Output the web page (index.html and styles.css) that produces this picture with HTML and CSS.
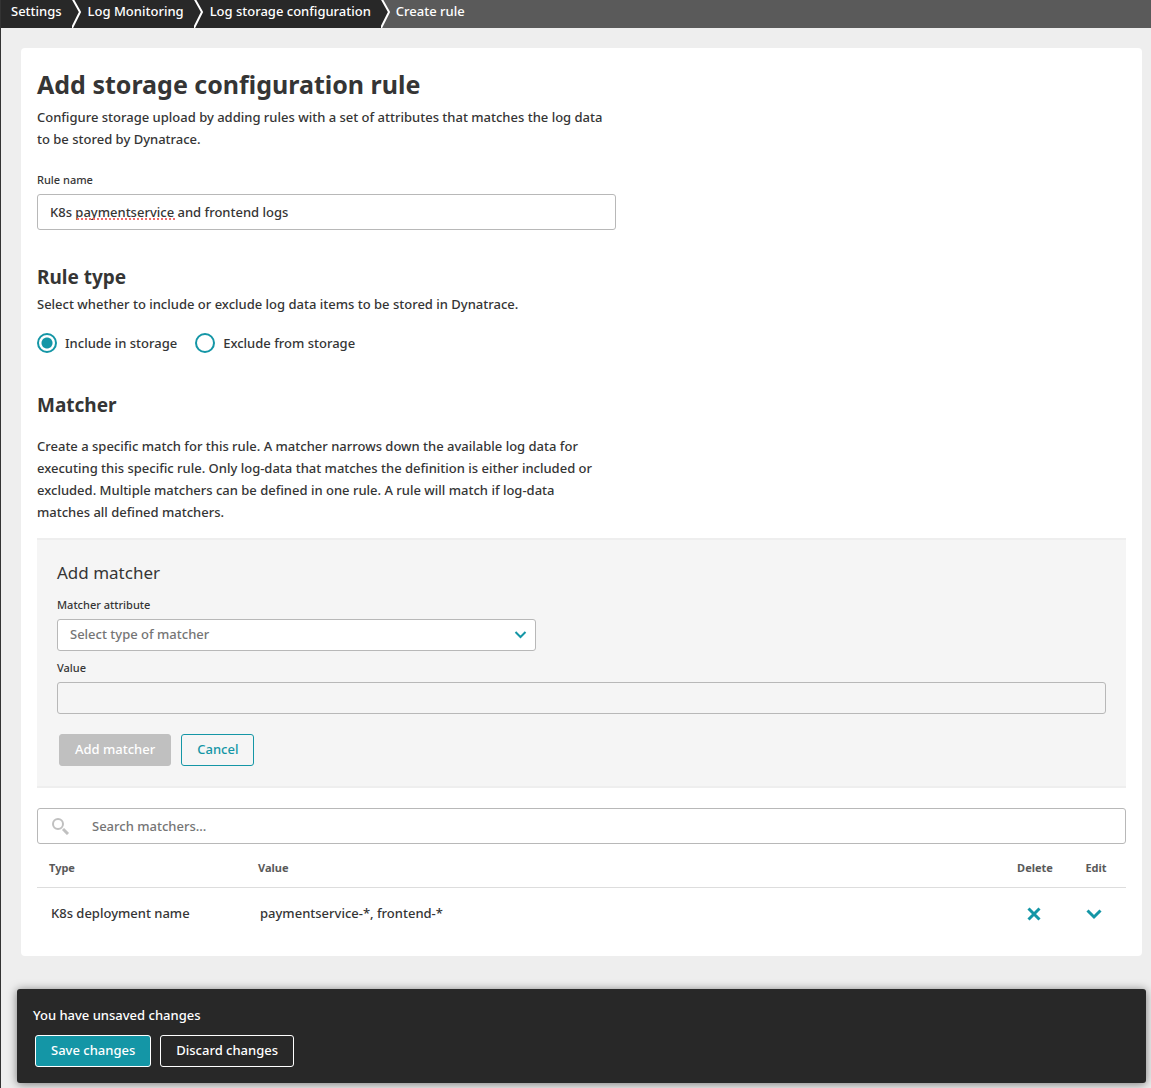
FILE: index.html
```html
<!DOCTYPE html>
<html lang="en">
<head>
<meta charset="utf-8">
<meta name="viewport" content="width=device-width, initial-scale=1">
<title>Create rule</title>
<link rel="stylesheet" href="styles.css">
</head>
<body>
<nav class="breadcrumbs" aria-label="Breadcrumb">
  <a class="crumb" href="#settings">Settings</a>
  <svg class="crumb-sep" viewBox="0 0 10 28" aria-hidden="true"><path d="M-1-4L8 12L-1 30"/></svg>
  <a class="crumb" href="#logs">Log Monitoring</a>
  <svg class="crumb-sep" viewBox="0 0 10 28" aria-hidden="true"><path d="M-1-4L8 12L-1 30"/></svg>
  <a class="crumb" href="#storage">Log storage configuration</a>
  <svg class="crumb-sep crumb-sep-last" viewBox="0 0 10 28" aria-hidden="true"><path d="M-1-4L8 12L-1 30"/></svg>
  <a class="crumb crumb-current" href="#create" aria-current="page">Create rule</a>
</nav>

<main class="card">
  <h1 class="title">Add storage configuration rule</h1>
  <p class="text">Configure storage upload by adding rules with a set of attributes that matches the log data to be stored by Dynatrace.</p>

  <div class="field rule-name">
    <label class="label" for="rule-name">Rule name</label>
    <div class="spelled">
      <input class="input" id="rule-name" type="text" value="K8s paymentservice and frontend logs" spellcheck="false">
      <span class="squiggle" aria-hidden="true"></span>
    </div>
  </div>

  <section class="rule-type">
    <h2 class="subtitle">Rule type</h2>
    <p class="text">Select whether to include or exclude log data items to be stored in Dynatrace.</p>
    <div class="radios">
      <label class="radio"><input class="radio-input" type="radio" name="type" checked>Include in storage</label>
      <label class="radio"><input class="radio-input" type="radio" name="type">Exclude from storage</label>
    </div>
  </section>

  <section class="matcher">
    <h2 class="subtitle">Matcher</h2>
    <p class="text matcher-text">Create a specific match for this rule. A matcher narrows down the available log data for executing this specific rule. Only log-data that matches the definition is either included or excluded. Multiple matchers can be defined in one rule. A rule will match if log-data matches all defined matchers.</p>

    <form class="panel">
      <h3 class="panel-title">Add matcher</h3>
      <label class="label" for="attribute">Matcher attribute</label>
      <div class="select-wrap">
        <select class="select" id="attribute"><option>Select type of matcher</option></select>
        <svg class="select-icon" viewBox="0 0 12 8" aria-hidden="true"><path d="M1 1L6 6L11 1"/></svg>
      </div>
      <label class="label value-label" for="value">Value</label>
      <input class="input input-disabled" id="value" type="text" disabled>
      <div class="buttons panel-buttons">
        <button class="button button-disabled" type="button" disabled>Add matcher</button>
        <button class="button button-outline" type="button">Cancel</button>
      </div>
    </form>

    <div class="search">
      <svg class="search-icon" viewBox="0 0 18 18" aria-hidden="true"><circle cx="6" cy="7" r="5"/><path d="M11 12L16 17" class="search-handle"/></svg>
      <input class="search-input" type="search" placeholder="Search matchers..." aria-label="Search matchers">
    </div>

    <table class="table">
      <thead>
        <tr><th class="col-type">Type</th><th>Value</th><th class="col-delete">Delete</th><th class="col-edit">Edit</th></tr>
      </thead>
      <tbody>
        <tr>
          <td>K8s deployment name</td>
          <td>paymentservice-*, frontend-*</td>
          <td class="cell-icon"><button class="icon-button" type="button" aria-label="Delete"><svg class="icon" viewBox="0 0 16 16" aria-hidden="true"><path d="M2.500 2.500L13.500 13.500M13.500 2.500L2.500 13.500"/></svg></button></td>
          <td class="cell-icon cell-edit"><button class="icon-button" type="button" aria-label="Edit"><svg class="icon" viewBox="0 0 16 16" aria-hidden="true"><path d="M1.500 4.500L8 11L14.500 4.500"/></svg></button></td>
        </tr>
      </tbody>
    </table>
  </section>
</main>

<footer class="unsaved">
  <p class="unsaved-text">You have unsaved changes</p>
  <div class="buttons">
    <button class="button button-save" type="button">Save changes</button>
    <button class="button button-discard" type="button">Discard changes</button>
  </div>
</footer>
</body>
</html>
```

FILE: styles.css
```css
* {
  box-sizing: border-box;
}

html {
  background: #eee;
}

body {
  margin: 0;
  min-height: 100vh;
  border-left: 1px solid #333;
  color: #353535;
  font: 500 13px/22px "Noto Sans", "Open Sans", sans-serif;
}

h1, h2, h3, p {
  margin: 0;
}

button, input, select {
  font: inherit;
  color: inherit;
}

.breadcrumbs {
  display: flex;
  height: 28px;
  background: #5a5a5a;
  color: #fff;
}

.crumb {
  padding: 0 10px 0 6px;
  background: #282828;
  color: #fff;
  text-decoration: none;
  white-space: nowrap;
}

.crumb:first-child {
  padding-left: 10px;
}

.crumb-current {
  padding-left: 5px;
  background: none;
}

.crumb-sep {
  flex: none;
  width: 10px;
  height: 28px;
  background: #282828;
  fill: #282828;
  stroke: #fff;
  stroke-width: 2;
}

.crumb-sep-last {
  background: #5a5a5a;
}

.card {
  margin: 20px 9px 33px 20px;
  padding: 16px;
  border-radius: 4px;
  background: #fff;
}

.title {
  margin-bottom: 2px;
  font-size: 25px;
  line-height: 40px;
  font-weight: 700;
}

.text {
  max-width: 579px;
}

.label {
  display: block;
  margin-bottom: 6px;
  font-size: 11px;
  line-height: 16px;
}

.rule-name {
  max-width: 579px;
  margin-top: 22px;
}

.spelled {
  position: relative;
}

.squiggle {
  position: absolute;
  left: 40px;
  bottom: 10px;
  width: 98px;
  border-bottom: 2px dotted #f06a6a;
}

.input {
  display: block;
  width: 100%;
  height: 36px;
  padding: 0 12px;
  border: 1px solid #b8b8b8;
  border-radius: 3px;
  background: #fff;
}

.input-disabled {
  height: 32px;
  background: #f5f5f5;
}

.rule-type {
  margin-top: 33px;
}

.subtitle {
  margin-bottom: 2px;
  font-size: 19px;
  line-height: 28px;
  font-weight: 700;
}

.radios {
  display: flex;
  gap: 18px;
  margin-top: 17px;
}

.radio {
  display: flex;
  align-items: center;
  gap: 8px;
}

.radio-input {
  appearance: none;
  width: 20px;
  height: 20px;
  margin: 0;
  border: 2px solid #1496a6;
  border-radius: 50%;
  background: #fff;
}

.radio-input:checked {
  background: radial-gradient(circle, #1496a6 5px, #fff 6px);
}

.matcher {
  margin-top: 37px;
}

.matcher-text {
  max-width: 570px;
  margin-top: 16px;
}

.panel {
  margin-top: 15px;
  padding: 21px 20px 20px;
  border: solid #eee;
  border-width: 2px 0;
  background: #f5f5f5;
}

.panel-title {
  margin-bottom: 12px;
  font-size: 17px;
  line-height: 24px;
  font-weight: 400;
}

.select-wrap {
  position: relative;
  max-width: 479px;
}

.select {
  display: block;
  appearance: none;
  width: 100%;
  height: 32px;
  padding: 0 32px 2px 12px;
  border: 1px solid #b8b8b8;
  border-radius: 3px;
  background: #fff;
  color: #757575;
}

.select-icon {
  position: absolute;
  top: 12px;
  right: 9px;
  width: 13px;
  height: 8px;
  fill: none;
  stroke: #1496a6;
  stroke-width: 2;
  pointer-events: none;
}

.value-label {
  margin-top: 9px;
}

.buttons {
  display: flex;
  gap: 9px;
  padding-left: 2px;
}

.panel-buttons {
  gap: 10px;
  margin-top: 20px;
}

.button {
  height: 32px;
  padding: 0 15px 2px;
  border: 1px solid;
  border-radius: 3px;
  background: none;
  white-space: nowrap;
}

.button-disabled {
  border-color: #c0c0c0;
  background: #c0c0c0;
  color: #fff;
}

.button-outline {
  border-color: #1496a6;
  color: #1496a6;
}

.button-save {
  border-color: #fff;
  background: #1496a6;
  color: #fff;
}

.button-discard {
  color: #fff;
}

.search {
  display: flex;
  align-items: center;
  height: 36px;
  margin-top: 20px;
  padding-left: 14px;
  border: 1px solid #b8b8b8;
  border-radius: 3px;
}

.search-icon {
  flex: none;
  width: 18px;
  height: 18px;
  fill: none;
  stroke: #c0c0c0;
  stroke-width: 2;
}

.search-handle {
  stroke-width: 3;
}

.search-input {
  flex: 1;
  margin-left: 22px;
  padding: 0;
  border: 0;
  background: none;
}

.search-input::placeholder {
  color: #757575;
}

.table {
  width: 100%;
  margin-bottom: 1px;
  border-collapse: collapse;
  table-layout: fixed;
}

.table th {
  height: 43px;
  padding: 6px 0 0 12px;
  border-bottom: 1px solid #ddd;
  color: #5a5a5a;
  font-size: 11px;
  font-weight: 700;
  text-align: left;
}

.table td {
  height: 52px;
  padding: 0 0 0 14px;
}

.table .col-type {
  width: 209px;
}

.table .col-delete,
.table .col-edit {
  padding-left: 2px;
  text-align: center;
}

.table .col-delete {
  width: 60px;
}

.table .col-edit {
  width: 62px;
}

.table .cell-icon {
  padding: 2px 0 0;
}

.table .cell-edit {
  padding-right: 2px;
}

.icon-button {
  display: block;
  width: 16px;
  height: 16px;
  margin: 0 auto;
  padding: 0;
  border: 0;
  background: none;
}

.icon {
  display: block;
  fill: none;
  stroke: #1496a6;
  stroke-width: 3;
}

.unsaved {
  margin: 0 5px 5px 16px;
  padding: 15px 16px 16px;
  border-radius: 3px;
  background: #282828;
  box-shadow: 0 1px 10px rgba(0, 0, 0, 0.5);
  color: #fff;
}

.unsaved-text {
  margin-bottom: 9px;
}
```
